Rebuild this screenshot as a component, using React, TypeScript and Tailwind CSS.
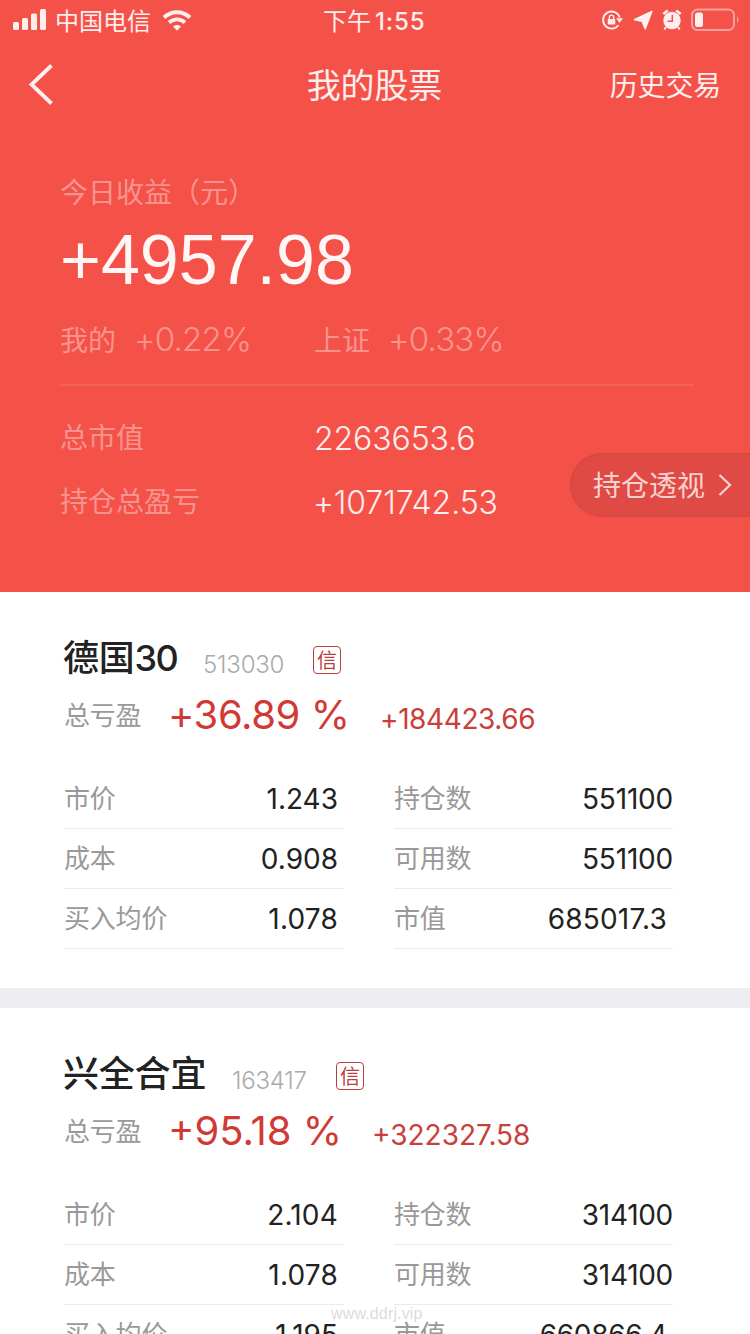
import React from 'react';
import { clsx } from 'clsx';

interface Cell {
  label: string;
  value: string;
  valueClass?: string;
}

interface Holding {
  name: string;
  suffix?: string;
  code: string;
  percent: string;
  profit: string;
  nameClass: string;
  codeClass: string;
  percentClass: string;
  profitClass: string;
  left: Cell[];
  right: Cell[];
}

const holdings: Holding[] = [
  {
    name: '德国',
    suffix: '30',
    code: '513030',
    percent: '+36.89 %',
    profit: '+184423.66',
    nameClass: 'w-[139px]',
    codeClass: 'w-[110px]',
    percentClass: 'w-[212px] tracking-[-0.4px]',
    profitClass: 'tracking-[-0.4px]',
    left: [
      { label: '市价', value: '1.243' },
      { label: '成本', value: '0.908' },
      { label: '买入均价', value: '1.078', valueClass: 'tracking-[0.2px]' },
    ],
    right: [
      { label: '持仓数', value: '551100', valueClass: 'tracking-[-0.2px]' },
      { label: '可用数', value: '551100', valueClass: 'tracking-[-0.2px]' },
      { label: '市值', value: '685017.3', valueClass: 'pr-[6px] tracking-[0.2px]' },
    ],
  },
  {
    name: '兴全合宜',
    code: '163417',
    percent: '+95.18 %',
    profit: '+322327.58',
    nameClass: 'w-[168px]',
    codeClass: 'w-[104px]',
    percentClass: 'w-[204px] tracking-[0px]',
    profitClass: 'tracking-[0px]',
    left: [
      { label: '市价', value: '2.104', valueClass: 'tracking-[0.2px]' },
      { label: '成本', value: '1.078', valueClass: 'tracking-[0.2px]' },
      { label: '买入均价', value: '1.195' },
    ],
    right: [
      { label: '持仓数', value: '314100', valueClass: 'tracking-[-0.3px]' },
      { label: '可用数', value: '314100', valueClass: 'tracking-[-0.3px]' },
      { label: '市值', value: '660866.4', valueClass: 'pr-[6px] tracking-[-0.3px]' },
    ],
  },
];

function StatusBar() {
  return (
    <div className="flex h-10 items-center justify-between pl-[13px] pr-[10px] text-white/90">
      <div className="flex w-[310px] items-center">
        <svg className="h-[22px] w-[34px]" viewBox="0 0 34 22" fill="currentColor">
          <rect x="0" y="13" width="6" height="8" rx="1.5" />
          <rect x="9" y="9" width="6" height="12" rx="1.5" />
          <rect x="18" y="4.5" width="6" height="16.5" rx="1.5" />
          <rect x="27" y="0" width="6" height="21" rx="1.5" />
        </svg>
        <span className="ml-2 pt-[3px] text-[24px] leading-none">中国电信</span>
        <svg className="ml-[11px] h-[23px] w-[30px]" viewBox="0 0 30 23" fill="none">
          <path d="M2 8.5C9.5 1.5 20.5 1.5 28 8.5" stroke="currentColor" strokeWidth="4" />
          <path d="M7 13.5C11.8 9.300 18.2 9.300 23 13.5" stroke="currentColor" strokeWidth="3.8" />
          <path d="M11 17.5C13.3 15.5 16.7 15.5 19 17.5L15 21.8Z" fill="currentColor" />
        </svg>
      </div>
      <div className="flex flex-1 items-center pt-[3px] text-[24px] leading-none">
        <span className="font-normal">下午</span>
        <span className="ml-[4px] font-medium tracking-[0.9px]">1:55</span>
      </div>
      <div className="flex items-center">
        <svg className="h-[22px] w-[22px]" viewBox="0 0 22 22" fill="none">
          <path d="M17.4 16.2A8.5 8.5 0 1 1 18.7 8.5" stroke="currentColor" strokeWidth="1.9" />
          <path d="M15 9.2H22L18.6 13.8Z" fill="currentColor" />
          <rect x="6.7" y="10" width="7.600" height="5.6" rx="0.8" fill="currentColor" />
          <path d="M8.3 10V8.3a2.2 2.2 0 0 1 4.4 0V10" stroke="currentColor" strokeWidth="1.4" />
        </svg>
        <svg className="ml-[10px] h-[20px] w-[20px]" viewBox="0 0 20 20" fill="currentColor">
          <path d="M18.8 1.5L1.500 9.600L9.200 11.200L12.200 18.800Z" stroke="currentColor" strokeWidth="1.6" strokeLinejoin="round" />
        </svg>
        <svg className="ml-[9px] h-[22px] w-[20px]" viewBox="0 0 20 22" fill="none">
          <circle cx="10" cy="11.5" r="8.7" fill="currentColor" />
          <path d="M1.3 5L5.8 1.5M18.7 5L14.2 1.5" stroke="currentColor" strokeWidth="2.6" />
          <path d="M4 18L2.3 20.5M16 18L17.7 20.5" stroke="currentColor" strokeWidth="2" />
          <path d="M10.3 6V12.2H5.5" stroke="#f45149" strokeWidth="1.5" />
        </svg>
        <svg className="ml-[9px] h-[24px] w-[49px]" viewBox="0 0 49 24" fill="none">
          <rect x="1" y="1.5" width="42" height="20.5" rx="5.5" stroke="currentColor" strokeOpacity="0.5" strokeWidth="2" />
          <rect x="4" y="4.5" width="8" height="14.5" rx="2.5" fill="currentColor" />
          <path d="M46 8.5c2 1 2 5.5 0 6.5Z" fill="currentColor" fillOpacity="0.5" />
        </svg>
      </div>
    </div>
  );
}

function NavBar() {
  return (
    <div className="flex h-[88px] items-center justify-between pl-[27px] pr-[29px] pt-[2px] text-white/90">
      <svg className="h-[42px] w-[112px]" viewBox="0 0 112 42" fill="none">
        <path d="M24.5 1.500L4.5 20.500L24.5 39.500" stroke="currentColor" strokeWidth="3.8" />
      </svg>
      <h1 className="pt-[2px] text-[34px] leading-none tracking-[-0.2px]">我的股票</h1>
      <span className="pt-[2px] text-[28px] leading-none tracking-[-0.2px]">历史交易</span>
    </div>
  );
}

function Summary() {
  return (
    <div className="relative px-[60px] pt-[43px]">
      <p className="h-11 text-[28px] leading-[44px] text-white/40">今日收益（元）</p>
      <p className="h-[90px] font-['Liberation_Sans',sans-serif] text-[70px] leading-[91px] tracking-[0px] text-white/95">
        +4957.98
      </p>
      <div className="flex h-[70px] items-center text-white/40">
        <span className="w-[74px] pt-[1px] text-[28px]">我的</span>
        <span className="w-[180px] text-[33px] font-light tracking-[-0.8px]">+0.22%</span>
        <span className="w-[74px] pt-[1px] text-[28px]">上证</span>
        <span className="text-[33px] font-light tracking-[-0.8px]">+0.33%</span>
      </div>
      <div className="mt-[9px] mr-[-4px] h-[2px] bg-white/10" />
      <div className="mt-[19px] flex h-16 items-center">
        <span className="w-[254px] pt-[1px] text-[28px] text-white/40">总市值</span>
        <span className="pt-[4px] text-[32px] font-light tracking-[-0.1px] text-white/90">2263653.6</span>
      </div>
      <div className="flex h-16 items-center">
        <span className="w-[253px] pt-[1px] text-[28px] text-white/40">持仓总盈亏</span>
        <span className="pt-[4px] text-[32px] font-light tracking-[-0.1px] text-white/90">+1071742.53</span>
      </div>
      {/* Floating entry pinned to the right edge */}
      <button className="absolute right-0 top-[325px] flex h-16 w-[180px] items-center rounded-l-full border-2 border-r-0 border-[#d94841] bg-[#df4b44] pl-[21px] text-[28px] leading-none text-white/75">
        <span className="pt-[2px]">持仓透视</span>
        <svg className="ml-[13px] h-[24px] w-[14px]" viewBox="0 0 14 24" fill="none">
          <path d="M1.5 2L12 12L1.5 22" stroke="currentColor" strokeWidth="2.2" />
        </svg>
      </button>
    </div>
  );
}

function CellColumn({ cells, className }: { cells: Cell[]; className: string }) {
  return (
    <div className={className}>
      {cells.map((cell) => (
        <div key={cell.label} className="flex h-[60px] items-center justify-between border-b border-[#ebebeb]">
          <span className="text-[26px] leading-none tracking-[-0.2px] text-[#999]">{cell.label}</span>
          <span className={clsx('text-[28px] leading-none text-[#222]', cell.valueClass)}>{cell.value}</span>
        </div>
      ))}
    </div>
  );
}

function HoldingCard({ holding }: { holding: Holding }) {
  return (
    <section className="h-[396px] bg-white pl-[64px] pr-[77px] pt-10">
      <div className="flex h-[52px] items-center">
        <h2 className={clsx('-ml-px mr-px text-[36px] font-medium leading-none tracking-[-0.2px] text-[#222]', holding.nameClass)}>
          {holding.name}
          {holding.suffix && <span className="font-[450] tracking-[-1.6px]">{holding.suffix}</span>}
        </h2>
        <span className={clsx('pt-[14px] text-[24px] font-light leading-none tracking-[-0.2px] text-[#aaa]', holding.codeClass)}>
          {holding.code}
        </span>
        <span className="mt-[4px] flex h-7 w-7 items-center justify-center rounded-[4px] border border-[#b8403c] pt-[2px] text-[20px] leading-none text-[#b8403c]">
          信
        </span>
      </div>
      <div className="flex h-[62px] items-center">
        <span className="w-[104px] pt-[1px] text-[26px] leading-none tracking-[-0.2px] text-[#999]">总亏盈</span>
        <span className={clsx('text-[40px] leading-none text-[#d03a34]', holding.percentClass)}>{holding.percent}</span>
        <span className={clsx('pt-[7px] text-[28px] leading-none text-[#c9403a]', holding.profitClass)}>{holding.profit}</span>
      </div>
      <div className="mt-[23px] flex justify-between">
        <CellColumn cells={holding.left} className="w-[280px] [&>div]:pr-[6px]" />
        <CellColumn cells={holding.right} className="w-[279px]" />
      </div>
    </section>
  );
}

export default function App() {
  return (
    <div className="relative h-[1334px] w-[750px] overflow-hidden bg-[#eeedf2] font-['Inter','Noto_Sans_CJK_SC',sans-serif] font-[370] whitespace-nowrap">
      <header className="h-[592px] bg-[#f45149]">
        <StatusBar />
        <NavBar />
        <Summary />
      </header>
      <main className="flex flex-col gap-5">
        {holdings.map((holding) => (
          <HoldingCard key={holding.code} holding={holding} />
        ))}
      </main>
      <span className="absolute left-[331px] top-[1304px] font-['Liberation_Sans',sans-serif] text-[16px] leading-[20px] tracking-[0.15px] text-[#dcdcdc]">
        www.ddrj.vip
      </span>
    </div>
  );
}
